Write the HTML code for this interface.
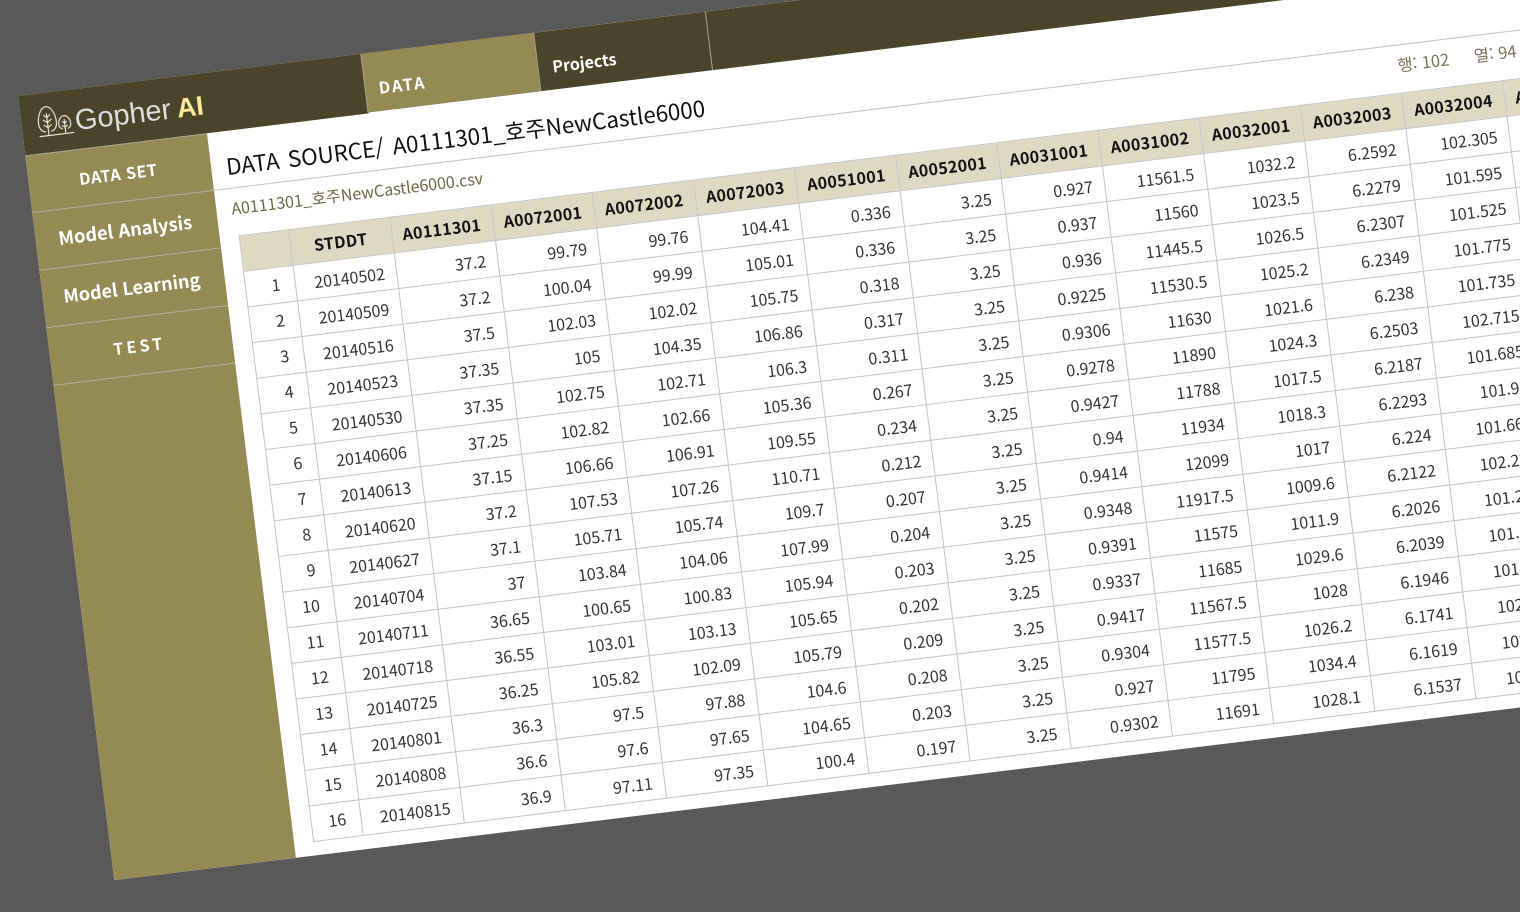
<!DOCTYPE html>
<html lang="ko"><head><meta charset="utf-8"><title>Gopher AI</title>
<style>
html,body{margin:0;padding:0;width:1520px;height:912px;overflow:hidden;background:#595959}
*{box-sizing:border-box}
body{font-family:"Noto Sans CJK KR","Liberation Sans",sans-serif}
#s{position:absolute;left:18px;top:96px;width:1800px;height:790px;transform:rotate(-7deg);transform-origin:0 0;background:#fff;overflow:hidden}
.abs{position:absolute;white-space:nowrap}
#top{left:0;top:0;width:1800px;height:59.2px;background:#4a452a}
#top2{left:0;top:0;width:346px;height:60px;background:#4a452a}
#side{left:0;top:60px;width:182.5px;height:730px;background:#948a54;border-top:1px solid #a8a490}
.tab{top:0;height:59.2px;border-left:1px solid #a9a68f;color:#fff;font-weight:700;font-size:16px;line-height:20px;padding:25px 0 0 14px}
.nav{left:0;width:182.5px;height:58px;border-bottom:1px solid #b3b097;color:#fff;font-weight:700;text-align:center;padding-right:2.5px}
table{position:absolute;left:203px;top:166px;border-collapse:collapse;table-layout:fixed;width:1376px;color:#333;font-size:16px;transform-origin:0 0;transform:translate(-1px,-.8px) scale(.9992,.9973)}
td,th{border:1px solid #c4c4c4;height:36px;padding:0 11.5px 0 0;text-align:right;line-height:20px;overflow:hidden;white-space:nowrap}
td:first-child{padding:0 14.5px 3px 0}
th{background:#ddd9c3;color:#111;font-weight:700;text-align:center;padding:0 2px 2px 0;letter-spacing:.35px}
</style></head><body>
<div id="s">
<div class="abs" id="top"></div>
<div class="abs" id="top2"></div>
<svg class="abs" style="left:16px;top:12px" width="36" height="33" viewBox="0 0 36 33" fill="none" stroke="#e6e4d6" stroke-width="1.2" stroke-linecap="round" stroke-linejoin="round"><path d="M7 27C3 26 1 23 1 18C1 10 5 2 10 2C15 2 19 10 19 18C19 23 17 26 13 27"/><path d="M10 9V30M10 13L7 10.500M10 13L13 10.500M10 18L6 15M10 18L14 15M10 23L6.500 20.500M10 23L13.500 20.500"/><path d="M24 26C22 25 21 24 21 21C21 17 24 13 27 13C30 13 33 17 33 21C33 24 32 25 30 26"/><path d="M27 17V30M27 20.500L25 19M27 20.500L29 19M27 24.500L24.500 23M27 24.500L29.500 23"/><path d="M1 31H35"/></svg>
<div class="abs" style="left:53.500px;top:15px;font:29px/34px 'Liberation Sans',sans-serif;color:#dedede">Gopher</div>
<div class="abs" style="left:156px;top:15px;font:700 27px/34px 'Liberation Sans',sans-serif;color:#fde99a">AI</div>
<div class="abs tab" style="left:345px;width:174px;background:#948a54;padding-left:13px;letter-spacing:2px">DATA</div>
<div class="abs tab" style="left:519px;width:173px">Projects</div>
<div class="abs tab" style="left:692px;width:10px"></div>
<div class="abs" id="side"></div>
<div class="abs nav" style="top:61px;height:57px;font-size:16px;line-height:56px;letter-spacing:.6px">DATA SET</div>
<div class="abs nav" style="top:118px;font-size:18.300px;line-height:56px">Model Analysis</div>
<div class="abs nav" style="top:176px;font-size:18px;line-height:56px;padding-right:3.5px">Model Learning</div>
<div class="abs nav" style="top:234px;font-size:16px;line-height:56px;letter-spacing:3.200px">TEST</div>
<div class="abs" style="left:198px;top:75px;font-size:22.400px;line-height:40px;color:#111;word-spacing:2.500px">DATA SOURCE/ A0111301_호주NewCastle6000</div>
<div class="abs" style="left:182px;top:117px;width:1620px;height:1px;background:#c4c4c4"></div>
<div class="abs" style="left:198px;top:125px;font-size:16px;line-height:24px;color:#6b6748">A0111301_호주NewCastle6000.csv</div>
<div class="abs" style="left:1373px;top:125px;font-size:16.500px;line-height:24px;color:#77735a">행: 102</div>
<div class="abs" style="left:1450px;top:125px;font-size:16.500px;line-height:24px;color:#77735a">열: 94</div>
<table>
<colgroup><col style="width:50px"><col style="width:102px"><col style="width:102px"><col style="width:102px"><col style="width:102px"><col style="width:102px"><col style="width:102px"><col style="width:102px"><col style="width:102px"><col style="width:102px"><col style="width:102px"><col style="width:102px"><col style="width:102px"><col style="width:102px"></colgroup>
<tr><th></th><th>STDDT</th><th>A0111301</th><th>A0072001</th><th>A0072002</th><th>A0072003</th><th>A0051001</th><th>A0052001</th><th>A0031001</th><th>A0031002</th><th>A0032001</th><th>A0032003</th><th>A0032004</th><th>A0033001</th></tr>
<tr><td>1<td>20140502<td>37.2<td>99.79<td>99.76<td>104.41<td>0.336<td>3.25<td>0.927<td>11561.5<td>1032.2<td>6.2592<td>102.305<td></tr>
<tr><td>2<td>20140509<td>37.2<td>100.04<td>99.99<td>105.01<td>0.336<td>3.25<td>0.937<td>11560<td>1023.5<td>6.2279<td>101.595<td></tr>
<tr><td>3<td>20140516<td>37.5<td>102.03<td>102.02<td>105.75<td>0.318<td>3.25<td>0.936<td>11445.5<td>1026.5<td>6.2307<td>101.525<td></tr>
<tr><td>4<td>20140523<td>37.35<td>105<td>104.35<td>106.86<td>0.317<td>3.25<td>0.9225<td>11530.5<td>1025.2<td>6.2349<td>101.775<td></tr>
<tr><td>5<td>20140530<td>37.35<td>102.75<td>102.71<td>106.3<td>0.311<td>3.25<td>0.9306<td>11630<td>1021.6<td>6.238<td>101.735<td></tr>
<tr><td>6<td>20140606<td>37.25<td>102.82<td>102.66<td>105.36<td>0.267<td>3.25<td>0.9278<td>11890<td>1024.3<td>6.2503<td>102.715<td></tr>
<tr><td>7<td>20140613<td>37.15<td>106.66<td>106.91<td>109.55<td>0.234<td>3.25<td>0.9427<td>11788<td>1017.5<td>6.2187<td>101.685<td></tr>
<tr><td>8<td>20140620<td>37.2<td>107.53<td>107.26<td>110.71<td>0.212<td>3.25<td>0.94<td>11934<td>1018.3<td>6.2293<td>101.95<td></tr>
<tr><td>9<td>20140627<td>37.1<td>105.71<td>105.74<td>109.7<td>0.207<td>3.25<td>0.9414<td>12099<td>1017<td>6.224<td>101.665<td></tr>
<tr><td>10<td>20140704<td>37<td>103.84<td>104.06<td>107.99<td>0.204<td>3.25<td>0.9348<td>11917.5<td>1009.6<td>6.2122<td>102.225<td></tr>
<tr><td>11<td>20140711<td>36.65<td>100.65<td>100.83<td>105.94<td>0.203<td>3.25<td>0.9391<td>11575<td>1011.9<td>6.2026<td>101.275<td></tr>
<tr><td>12<td>20140718<td>36.55<td>103.01<td>103.13<td>105.65<td>0.202<td>3.25<td>0.9337<td>11685<td>1029.6<td>6.2039<td>101.125<td></tr>
<tr><td>13<td>20140725<td>36.25<td>105.82<td>102.09<td>105.79<td>0.209<td>3.25<td>0.9417<td>11567.5<td>1028<td>6.1946<td>101.075<td></tr>
<tr><td>14<td>20140801<td>36.3<td>97.5<td>97.88<td>104.6<td>0.208<td>3.25<td>0.9304<td>11577.5<td>1026.2<td>6.1741<td>102.055<td></tr>
<tr><td>15<td>20140808<td>36.6<td>97.6<td>97.65<td>104.65<td>0.203<td>3.25<td>0.927<td>11795<td>1034.4<td>6.1619<td>102.225<td></tr>
<tr><td>16<td>20140815<td>36.9<td>97.11<td>97.35<td>100.4<td>0.197<td>3.25<td>0.9302<td>11691<td>1028.1<td>6.1537<td>102.155<td></tr>
</table>
</div>
</body></html>
